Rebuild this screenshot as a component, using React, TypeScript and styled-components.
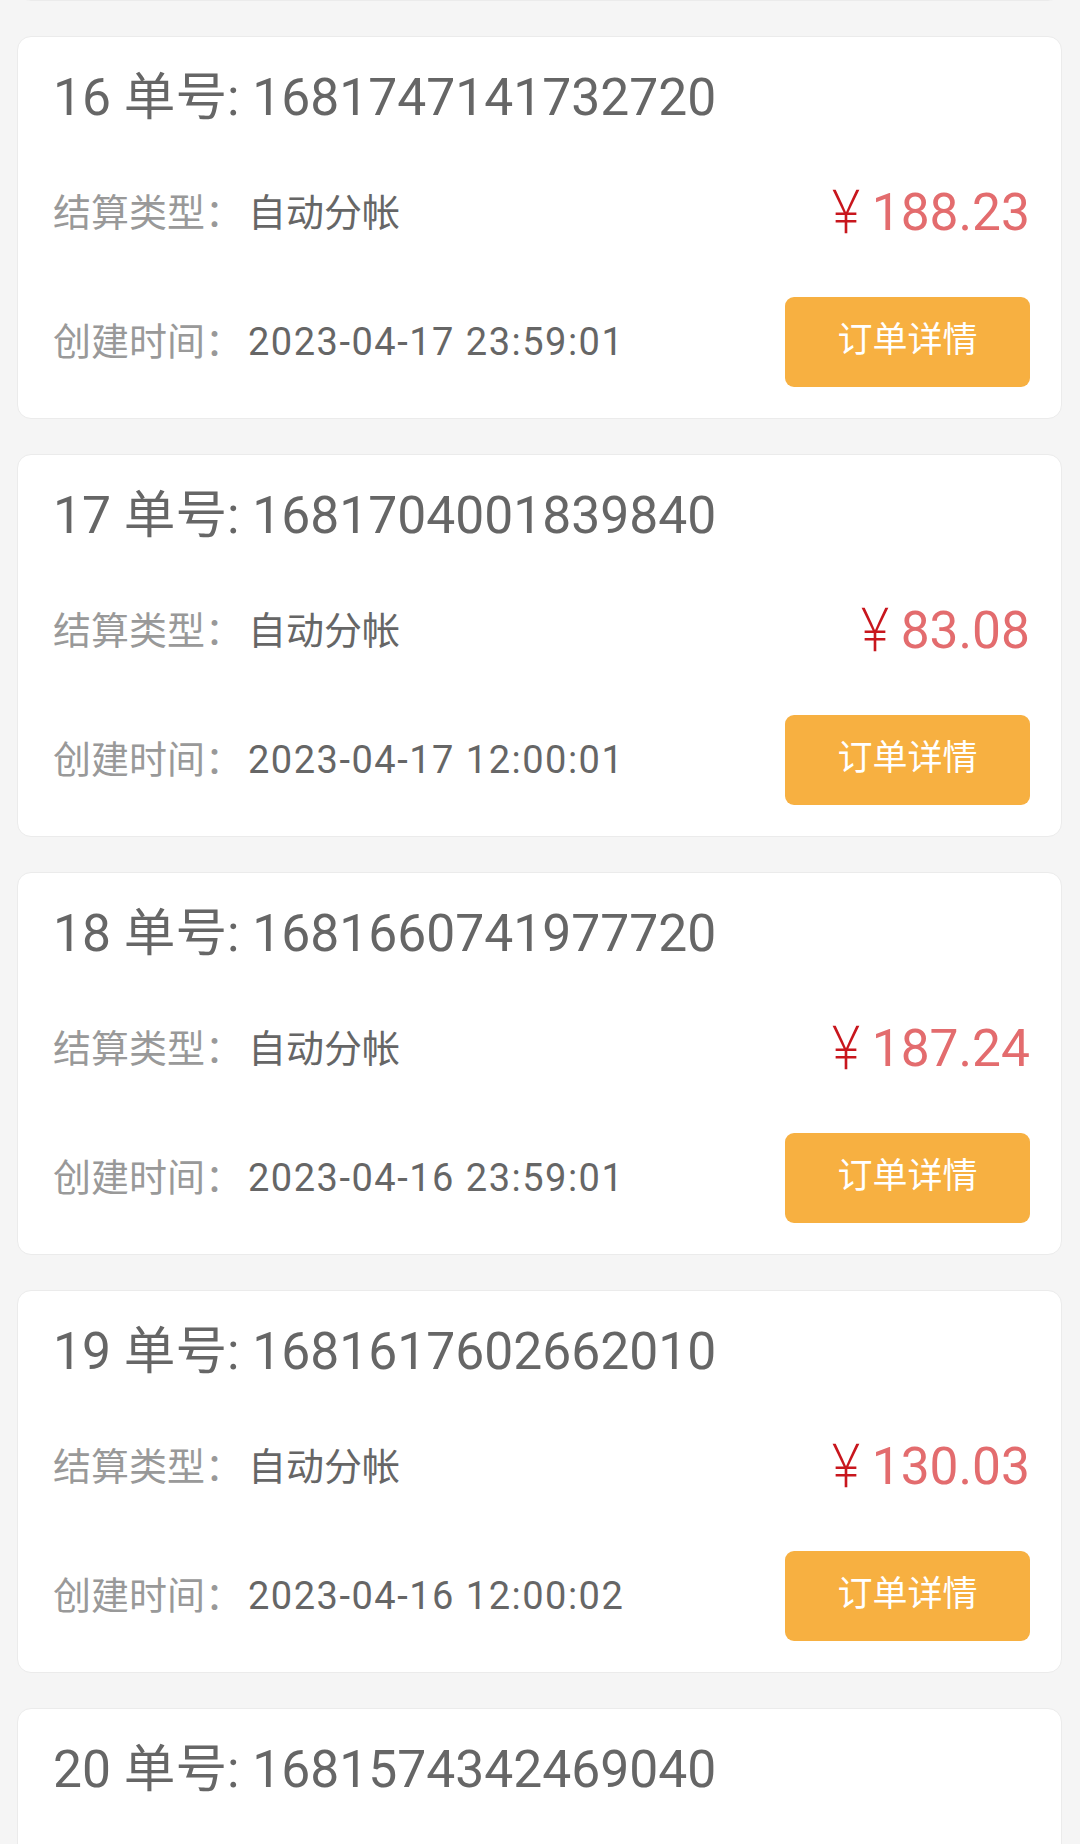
import * as React from "react";
import styled, { createGlobalStyle } from "styled-components";

type Order = {
  index: number;
  orderNo: string;
  settleType: string;
  amount: string;
  createdAt: string;
};

const orders: Order[] = [
  {
    index: 15,
    orderNo: "1681790401562230",
    settleType: "自动分帐",
    amount: "96.40",
    createdAt: "2023-04-18 12:00:01",
  },
  {
    index: 16,
    orderNo: "1681747141732720",
    settleType: "自动分帐",
    amount: "188.23",
    createdAt: "2023-04-17 23:59:01",
  },
  {
    index: 17,
    orderNo: "1681704001839840",
    settleType: "自动分帐",
    amount: "83.08",
    createdAt: "2023-04-17 12:00:01",
  },
  {
    index: 18,
    orderNo: "1681660741977720",
    settleType: "自动分帐",
    amount: "187.24",
    createdAt: "2023-04-16 23:59:01",
  },
  {
    index: 19,
    orderNo: "1681617602662010",
    settleType: "自动分帐",
    amount: "130.03",
    createdAt: "2023-04-16 12:00:02",
  },
  {
    index: 20,
    orderNo: "1681574342469040",
    settleType: "自动分帐",
    amount: "66.12",
    createdAt: "2023-04-15 23:59:01",
  },
];

const GlobalStyle = createGlobalStyle`
  html, body {
    margin: 0;
    padding: 0;
    background: #f5f5f5;
    font-family: Roboto, "Noto Sans CJK SC", sans-serif;
  }
  #root {
    height: 1844px;
    overflow: hidden;
  }
`;

const OrderList = styled.div`
  display: flex;
  flex-direction: column;
  gap: 35px;
  padding: 0 18px 0 17px;
  /* list is scrolled: previous card sits above the fold */
  margin-top: -382px;
`;

const Card = styled.div`
  box-sizing: border-box;
  height: 383px;
  background: #fff;
  border: 1px solid #ebebeb;
  border-radius: 14px;
  padding: 35px 31px 31px 35px;
  display: flex;
  flex-direction: column;
`;

const Title = styled.div`
  height: 52px;
  line-height: 52px;
  font-size: 51.6px;
  color: #666;
  white-space: nowrap;
`;

const Row = styled.div<{ $gap: number; $height: number }>`
  margin-top: ${(p) => p.$gap}px;
  height: ${(p) => p.$height}px;
  display: flex;
  align-items: center;
  justify-content: space-between;
`;

const Field = styled.div`
  display: flex;
  align-items: center;
  font-size: 38px;
  line-height: 38px;
  white-space: nowrap;
`;

const Label = styled.span`
  color: #999;
  width: 195px;
  flex-shrink: 0;
`;

const Value = styled.span<{ $spaced?: boolean }>`
  color: #666;
  letter-spacing: ${(p) => (p.$spaced ? "1.5px" : "0")};
`;

const Price = styled.div`
  display: flex;
  align-items: baseline;
  height: 50px;
  line-height: 50px;
  white-space: nowrap;
`;

const Currency = styled.span`
  font-family: "Noto Sans CJK SC", sans-serif;
  font-weight: 300;
  font-size: 60px;
  line-height: 30px;
  color: #c8161d;
  transform: translateY(3px) scaleX(0.75);
  margin-right: -4px;
`;

const Amount = styled.span`
  font-size: 51.5px;
  color: #e36c6e;
`;

const DetailButton = styled.button`
  width: 245px;
  height: 90px;
  border: none;
  border-radius: 9px;
  background: #f7b041;
  color: #fff;
  font-family: Roboto, "Noto Sans CJK SC", sans-serif;
  font-size: 35px;
  line-height: 35px;
  padding: 0 0 3px;
  cursor: pointer;
`;

const OrderCard = ({ order }: { order: Order }) => (
  <Card>
    <Title>
      {order.index} 单号: {order.orderNo}
    </Title>
    <Row $gap={64} $height={50}>
      <Field>
        <Label>结算类型：</Label>
        <Value>{order.settleType}</Value>
      </Field>
      <Price>
        <Currency>￥</Currency>
        <Amount>{order.amount}</Amount>
      </Price>
    </Row>
    <Row $gap={59} $height={90}>
      <Field>
        <Label>创建时间：</Label>
        <Value $spaced>{order.createdAt}</Value>
      </Field>
      <DetailButton>订单详情</DetailButton>
    </Row>
  </Card>
);

const App = () => (
  <>
    <GlobalStyle />
    <OrderList>
      {orders.map((order) => (
        <OrderCard key={order.orderNo} order={order} />
      ))}
    </OrderList>
  </>
);

export default App;
